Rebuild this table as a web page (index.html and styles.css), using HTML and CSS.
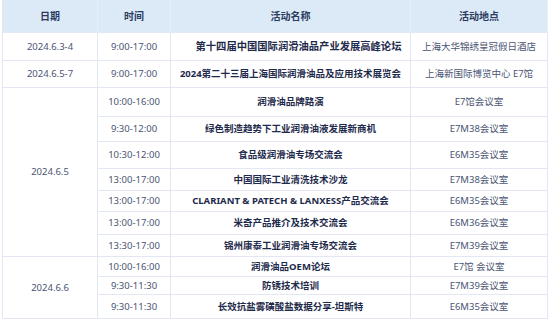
FILE: index.html
```html
<!DOCTYPE html>
<html lang="zh-CN">
<head>
<meta charset="utf-8">
<title>活动日程</title>
<link rel="stylesheet" href="styles.css">
</head>
<body>
<div class="schedule">
  <div class="c head">日期</div>
  <div class="c head">时间</div>
  <div class="c head">活动名称</div>
  <div class="c head">活动地点</div>

  <div class="c">2024.6.3-4</div>
  <div class="c">9:00-17:00</div>
  <div class="c title wide">第十四届中国国际润滑油品产业发展高峰论坛</div>
  <div class="c">上海大华锦绣皇冠假日酒店</div>

  <div class="c">2024.6.5-7</div>
  <div class="c">9:00-17:00</div>
  <div class="c title">2024第二十三届上海国际润滑油品及应用技术展览会</div>
  <div class="c">上海新国际博览中心 E7馆</div>

  <div class="c span7 low">2024.6.5</div>
  <div class="c">10:00-16:00</div>
  <div class="c title">润滑油品牌路演</div>
  <div class="c">E7馆会议室</div>

  <div class="c">9:30-12:00</div>
  <div class="c title">绿色制造趋势下工业润滑油液发展新商机</div>
  <div class="c">E7M38会议室</div>

  <div class="c">10:30-12:00</div>
  <div class="c title">食品级润滑油专场交流会</div>
  <div class="c">E6M35会议室</div>

  <div class="c">13:00-17:00</div>
  <div class="c title">中国国际工业清洗技术沙龙</div>
  <div class="c">E7M38会议室</div>

  <div class="c">13:00-17:00</div>
  <div class="c title">CLARIANT &amp; PATECH &amp; LANXESS产品交流会</div>
  <div class="c">E6M35会议室</div>

  <div class="c">13:00-17:00</div>
  <div class="c title">米奇产品推介及技术交流会</div>
  <div class="c">E6M36会议室</div>

  <div class="c">13:30-17:00</div>
  <div class="c title">锦州康泰工业润滑油专场交流会</div>
  <div class="c">E7M39会议室</div>

  <div class="c span3">2024.6.6</div>
  <div class="c">10:00-16:00</div>
  <div class="c title">润滑油品OEM论坛</div>
  <div class="c">E7馆 会议室</div>

  <div class="c">9:30-11:30</div>
  <div class="c title">防锈技术培训</div>
  <div class="c">E7M39会议室</div>

  <div class="c">9:30-11:30</div>
  <div class="c title">长效抗盐雾磺酸盐数据分享-坦斯特</div>
  <div class="c">E6M35会议室</div>
</div>
</body>
</html>
```

FILE: styles.css
```css
html, body {
  margin: 0;
  padding: 0;
  background: #ffffff;
}

body {
  font-family: "Noto Sans", "Noto Sans CJK SC", sans-serif;
  font-size: 9.5px;
  color: #4a5473;
}

.schedule {
  display: grid;
  grid-template-columns: 95px 73px 240px 137px;
  grid-template-rows: 33px 28px 27px 29px 25px 27px 22px 21px 23px 22px 20px 18px 24px;
  margin-left: 2px;
  width: 546px;
  border-left: 1px solid #e3e6f3;
  box-sizing: border-box;
}

.c {
  display: flex;
  align-items: center;
  justify-content: center;
  text-align: center;
  white-space: nowrap;
  border-right: 1px solid #e3e6f3;
  border-bottom: 1px solid #e3e6f3;
  box-sizing: border-box;
  line-height: 1;
}

.head {
  background: #dce9f6;
  color: #2b3b5f;
  font-weight: 700;
  font-size: 10px;
  border-right-color: #e9eff9;
  border-bottom-color: #e2e8f4;
}

.title {
  color: #1e2a4b;
  font-weight: 700;
}

.wide {
  font-size: 10.3px;
  padding-left: 16px;
}

.span7 {
  grid-row: span 7;
}

.span3 {
  grid-row: span 3;
}

.low {
  padding-top: 0;
}
```
